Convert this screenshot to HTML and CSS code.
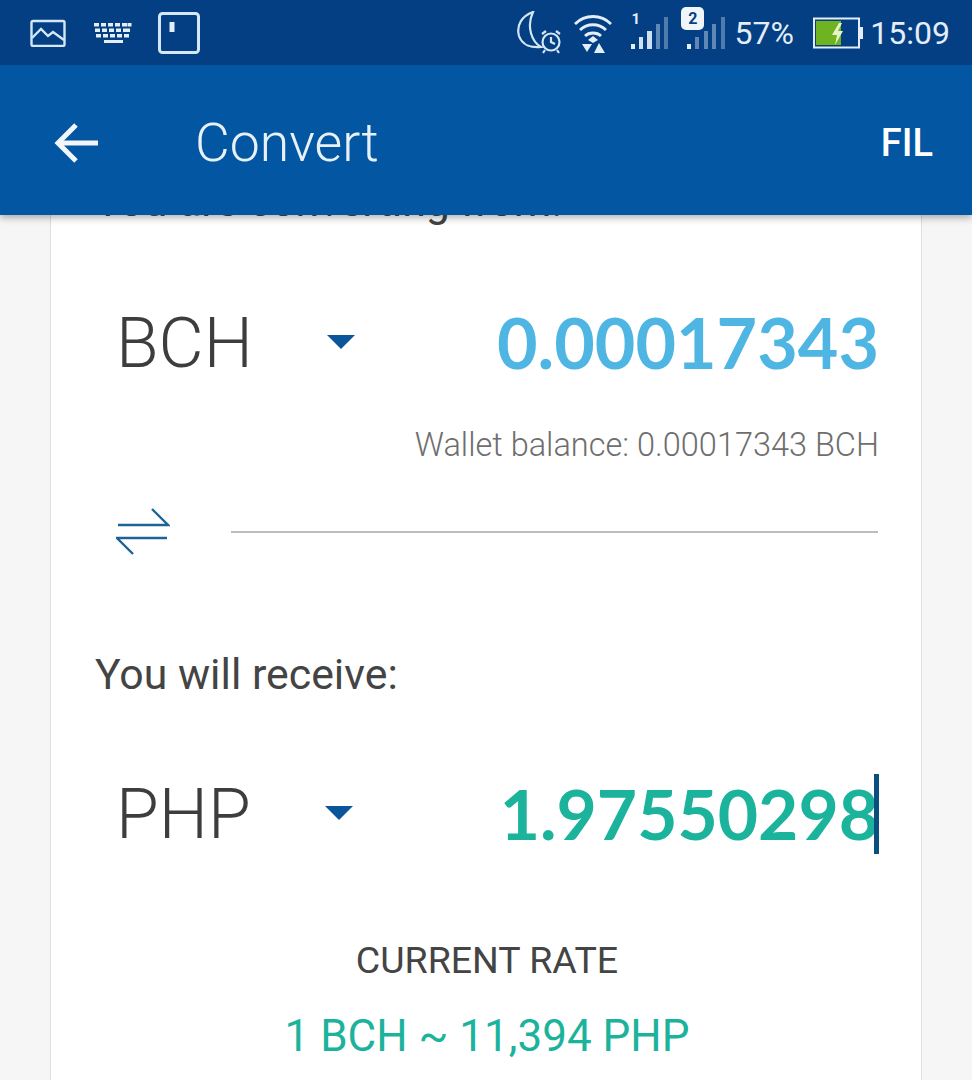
FILE: index.html
```html
<!DOCTYPE html>
<html lang="en">
<head>
   <meta charset="UTF-8">
   <meta name="viewport" content="width=device-width, initial-scale=1.0">
   <title>Convert</title>
   <link rel="stylesheet" href="styles.css">
</head>
<body>
   <!-- Phone status bar -->
   <div class="status-bar">
       <div class="status-left">
           <svg class="icon-picture" width="36" height="28" viewBox="0 0 36 28" fill="none" stroke="#d5e6f5" stroke-width="2.4">
               <rect x="1.5" y="2" width="33" height="25" rx="1.5"/>
               <path d="M2 19 L11 10 L18 17 L23 13 L34 21"/>
           </svg>
           <svg class="icon-keyboard" width="38" height="22" viewBox="0 0 38 22" fill="#e3eef8">
               <rect x="0" y="1" width="5" height="3.5"/><rect x="7" y="1" width="5" height="3.5"/><rect x="14" y="1" width="5" height="3.5"/><rect x="21" y="1" width="5" height="3.5"/><rect x="28" y="1" width="5" height="3.5"/><rect x="33.5" y="1" width="4" height="3.5"/>
               <rect x="1" y="6.5" width="5" height="3.5"/><rect x="8" y="6.5" width="5" height="3.5"/><rect x="15" y="6.5" width="5" height="3.5"/><rect x="22" y="6.5" width="5" height="3.5"/><rect x="29" y="6.5" width="7" height="3.5"/>
               <rect x="2" y="12" width="5" height="3.5"/><rect x="9" y="12" width="5" height="3.5"/><rect x="16" y="12" width="5" height="3.5"/><rect x="23" y="12" width="5" height="3.5"/><rect x="30" y="12" width="5" height="3.5"/>
               <rect x="10" y="18" width="19" height="3"/>
           </svg>
           <svg class="icon-sim" width="42" height="42" viewBox="0 0 42 42" fill="none" stroke="#d5e6f5" stroke-width="3">
               <rect x="1.5" y="1.5" width="39" height="39" rx="3"/>
               <rect x="12.5" y="11" width="3" height="8" fill="#e3eef8" stroke="#e3eef8" stroke-width="2"/>
           </svg>
       </div>
       <div class="status-right">
           <svg class="icon-moon" width="48" height="44" viewBox="0 0 48 44" fill="none" stroke="#d5e6f5" stroke-width="2.2">
               <path d="M17 1 C6 5 0 14 3 25 C6 34 15 37 25 36 C16 31 10 16 17 1 Z"/>
               <circle cx="35" cy="31" r="8.5"/>
               <path d="M35 26 V31 L39 33"/>
               <path d="M26 23 L30 20 M40 20 L44 23 M29 39 L27 42 M41 39 L43 42"/>
           </svg>
           <svg class="icon-wifi" width="40" height="42" viewBox="0 0 40 42" fill="none" stroke="#e3eef8" stroke-width="2.8">
               <path d="M2 12 C12 2 28 2 38 12"/>
               <path d="M7 18 C14 11 26 11 33 18"/>
               <path d="M12 24 C16 20 24 20 28 24"/>
               <path d="M15 28 L20 24 L25 28 L20 31 Z" fill="#e3eef8" stroke="none"/>
               <path d="M9 32 H19 L14 40 Z" fill="#e3eef8" stroke="none"/>
               <path d="M26 31 L32 41 H21 Z" fill="#e3eef8" stroke="none"/>
           </svg>
           <div class="signal">
               <span class="sim-num">1</span>
               <svg width="38" height="34" viewBox="0 0 38 34">
                   <rect x="0" y="28" width="4" height="5" fill="#e3eef8"/>
                   <rect x="8" y="21" width="4" height="12" fill="#cfe0f0"/>
                   <rect x="16" y="15" width="5" height="18" fill="#cfe0f0"/>
                   <rect x="25" y="8" width="4" height="25" fill="#5f88b6"/>
                   <rect x="33" y="1" width="4" height="32" fill="#4f7cad"/>
               </svg>
           </div>
           <div class="signal">
               <span class="sim-num sim-active">2</span>
               <svg width="38" height="34" viewBox="0 0 38 34">
                   <rect x="0" y="28" width="4" height="5" fill="#e3eef8"/>
                   <rect x="8" y="21" width="4" height="12" fill="#5f88b6"/>
                   <rect x="17" y="15" width="4" height="18" fill="#5f88b6"/>
                   <rect x="25" y="8" width="4" height="25" fill="#5f88b6"/>
                   <rect x="34" y="1" width="4" height="32" fill="#4f7cad"/>
               </svg>
           </div>
           <span class="status-text percent">57%</span>
           <svg class="icon-battery" width="51" height="32" viewBox="0 0 51 32">
               <rect x="1" y="1.5" width="45" height="29" fill="none" stroke="#e3eef8" stroke-width="2"/>
               <rect x="3" y="4" width="25" height="24" fill="#6fb320"/>
               <rect x="47" y="10" width="3" height="12" fill="#e3eef8"/>
               <path d="M26 6 L19 18 H24 L22 28 L30 14 H25 L29 6 Z" fill="#e6f5c8"/>
           </svg>
           <span class="status-text time">15:09</span>
       </div>
   </div>

   <!-- App header -->
   <header class="app-header">
       <svg class="back" width="44" height="40" viewBox="0 0 44 40" fill="none" stroke="#f2f6fa" stroke-width="5">
           <path d="M44 20 H4"/>
           <path d="M22 2 L4 20 L22 38"/>
       </svg>
       <h1 class="title">Convert</h1>
       <a class="lang">FIL</a>
   </header>

   <!-- Converter card, scrolled partly under the header -->
   <main class="page">
       <section class="card">
           <p class="label label-from">You are converting from:</p>

           <div class="amount-row row-from">
               <div class="currency">
                   <span>BCH</span>
                   <i class="caret"></i>
               </div>
               <span class="amount amount-blue">0.00017343</span>
           </div>
           <p class="balance">Wallet balance: 0.00017343 BCH</p>

           <div class="swap-row">
               <svg width="54" height="48" viewBox="0 0 54 48" fill="none" stroke="#1d6496" stroke-width="2.4">
                   <path d="M2 17 H52 L36 1"/>
                   <path d="M51 30 H1 L17 46"/>
               </svg>
               <div class="divider"></div>
           </div>

           <p class="label label-to">You will receive:</p>

           <div class="amount-row row-to">
               <div class="currency">
                   <span>PHP</span>
                   <i class="caret"></i>
               </div>
               <span class="amount amount-green">1.97550298<i class="cursor"></i></span>
           </div>

           <div class="rate">
               <p class="rate-title">CURRENT RATE</p>
               <p class="rate-value">1 BCH ~ 11,394 PHP</p>
           </div>
       </section>
   </main>
</body>
</html>
```

FILE: styles.css
```css
body {
    margin: 0;
    height: 1080px;
    overflow: hidden;
    font-family: 'Roboto', sans-serif;
    background-color: #f6f6f6;
}

p, h1 {
    margin: 0;
    font-weight: normal;
}

/* status bar */
.status-bar {
    position: relative;
    z-index: 3;
    display: flex;
    justify-content: space-between;
    align-items: center;
    height: 65px;
    padding: 0 22px 0 30px;
    background-color: #033f82;
    color: #e3eef8;
}

.status-left, .status-right {
    display: flex;
    align-items: center;
}

.status-left {
    gap: 28px;
}

.icon-keyboard {
    margin-right: -2px;
}

.icon-moon {
    margin-right: 9px;
}

.icon-wifi {
    margin-right: 18px;
}

.signal {
    position: relative;
    width: 38px;
    height: 34px;
    margin-right: 18px;
}

.signal:nth-of-type(2) {
    margin-right: 9px;
}

.signal svg {
    display: block;
}

.sim-num {
    position: absolute;
    left: 0;
    top: -5px;
    font-size: 15px;
    font-weight: 700;
    line-height: 16px;
    color: #e3eef8;
}

.sim-active {
    left: -6px;
    top: -9px;
    width: 23px;
    height: 23px;
    font-size: 16px;
    line-height: 23px;
    text-align: center;
    border-radius: 5px;
    background-color: #f0f5fa;
    color: #033f82;
}

.status-text {
    font-size: 32px;
    font-weight: 400;
}

.percent {
    margin-right: 19px;
}

.icon-battery {
    margin-right: 6.5px;
}

/* app header */
.app-header {
    position: relative;
    z-index: 2;
    display: flex;
    align-items: center;
    box-sizing: border-box;
    height: 150px;
    padding: 5px 39px 0 54px;
    background-color: #0256a2;
    color: #fff;
    box-shadow: 0 3px 7px rgba(0, 0, 0, 0.3);
}

.title {
    flex: 1;
    margin-left: 97px;
    font-size: 53.5px;
    font-weight: 300;
    color: #e8f1f8;
}

.lang {
    font-size: 38px;
    font-weight: 500;
}

/* card */
.page {
    margin-top: -38px;
    padding: 0 50px;
}

.card {
    box-sizing: border-box;
    height: 924px;
    padding: 0 42px 0 44px;
    background-color: #fff;
    border-left: 1px solid #dedede;
    border-right: 1px solid #dedede;
}

.label {
    font-size: 42.8px;
    color: #444;
    line-height: 48px;
}

.amount-row {
    display: flex;
    justify-content: space-between;
    align-items: center;
    padding-left: 21px;
    height: 90px;
}

.row-from {
    margin-top: 74px;
}

.row-to {
    margin-top: 72px;
}

.currency {
    display: flex;
    align-items: center;
    margin-bottom: 2px;
    font-size: 69.5px;
    font-weight: 300;
    color: #3d3d3d;
}

.caret {
    width: 0;
    height: 0;
    margin-left: 74px;
    margin-bottom: 2px;
    border-left: 14px solid transparent;
    border-right: 14px solid transparent;
    border-top: 14px solid #0b559b;
}

.amount {
    position: relative;
    margin-bottom: 4px;
    font-family: 'Lato', sans-serif;
    font-size: 70px;
    font-weight: 700;
}

.amount-blue {
    color: #4fb6e3;
}

.amount-green {
    font-size: 69.5px;
    color: #1cb39c;
}

.cursor {
    position: absolute;
    right: 0;
    top: 3px;
    width: 5px;
    height: 80px;
    background-color: #0a4f80;
}

.balance {
    margin-top: 37px;
    font-size: 32.5px;
    font-weight: 300;
    color: #6e6e6e;
    text-align: right;
}

.swap-row {
    display: flex;
    align-items: center;
    gap: 61px;
    margin-top: 44px;
    padding-left: 21px;
}

.divider {
    flex: 1;
    height: 2px;
    margin-right: 1px;
    background-color: #bdbdbd;
}

.label-to {
    margin-top: 94px;
}

.rate {
    margin-top: 78px;
    text-align: center;
}

.rate-title {
    font-size: 37.5px;
    color: #444;
}

.rate-value {
    margin-top: 28px;
    font-size: 44px;
    color: #1cb39c;
}
```
